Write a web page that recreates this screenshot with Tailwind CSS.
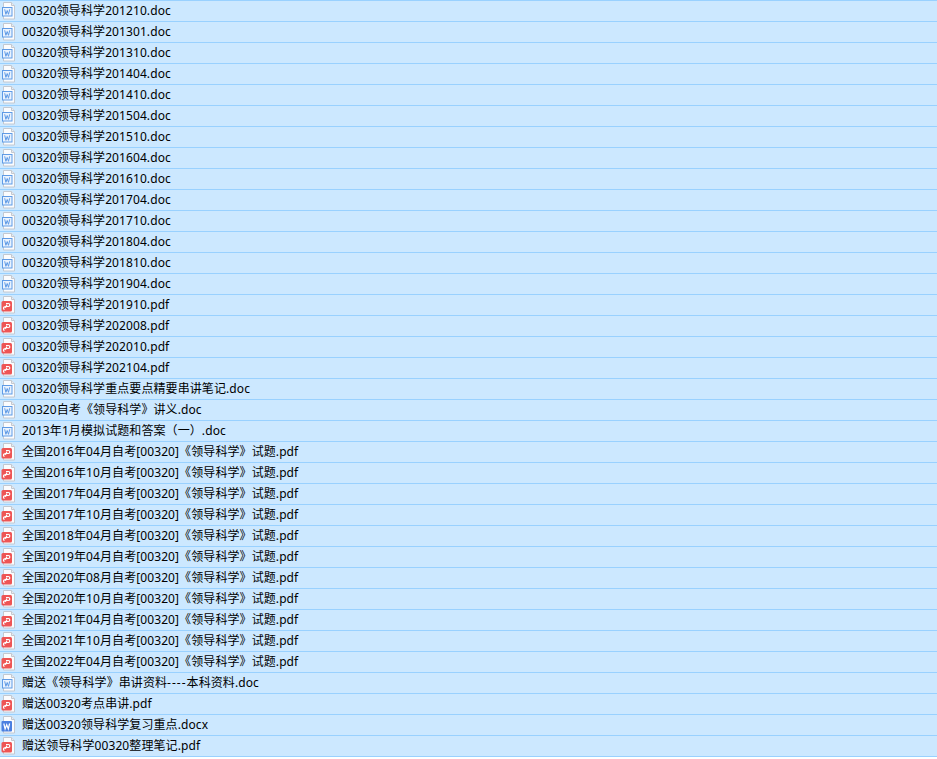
<!DOCTYPE html>
<html lang="zh">
<head>
  <meta charset="UTF-8">
  <title>00320领导科学</title>
  <script src="https://cdn.jsdelivr.net/npm/@tailwindcss/browser@4"></script>
</head>
<body class="bg-white overflow-hidden h-screen font-['Noto_Sans','Noto_Sans_CJK_SC',sans-serif] text-[12px] tracking-[0.09px] text-black">
  <svg class="hidden">
    <symbol id="doc" viewBox="0 0 16 18">
      <path d="M3.500.5h8l3 3v13.500h-11z" fill="#fbfcfe" stroke="#c3c8d0"/>
      <path d="M11.500.5v3h3" fill="#e8ebf0" stroke="#c3c8d0"/>
      <rect x="2.500" y="5.500" width="9.500" height="8.500" fill="#eaf3fe" stroke="#5f9be6"/>
      <path d="M4.700 7.300l1.200 5 1.300-3.800 1.300 3.800 1.200-5" fill="none" stroke="#5f9be6"/>
    </symbol>
    <symbol id="docx" viewBox="0 0 16 18">
      <path d="M3.500.5h8l3 3v13.500h-11z" fill="#fbfcfe" stroke="#c3c8d0"/>
      <path d="M11.500.5v3h3" fill="#e8ebf0" stroke="#c3c8d0"/>
      <rect x="1.500" y="5" width="10.500" height="10.500" rx="1" fill="#4a7fe0"/>
      <path d="M3.800 7.500l1.300 5.500L6.700 8.800l1.600 4.200 1.300-5.500" fill="none" stroke="#fff" stroke-width="1.200"/>
    </symbol>
    <symbol id="pdf" viewBox="0 0 16 18">
      <path d="M3.500.5h8l3 3v13.500h-11z" fill="#fbfcfe" stroke="#c3c8d0"/>
      <path d="M11.500.5v3h3" fill="#e8ebf0" stroke="#c3c8d0"/>
      <rect x="1.500" y="5" width="10.500" height="10.500" rx="1.500" fill="#ee5555"/>
      <path d="M4.500 13.500a1.300 1.300 0 1 1 1.200-2.200L7 8.500M6 7.500h2.300a1.500 1.500 0 0 1 0 3H5" fill="none" stroke="#fff" stroke-width="1.200"/>
    </symbol>
  </svg>

  <ul id="list" class="flex flex-col border-t border-[#99d1ff]"></ul>

  <script>
    const files = [
      '00320领导科学201210.doc', '00320领导科学201301.doc', '00320领导科学201310.doc',
      '00320领导科学201404.doc', '00320领导科学201410.doc', '00320领导科学201504.doc',
      '00320领导科学201510.doc', '00320领导科学201604.doc', '00320领导科学201610.doc',
      '00320领导科学201704.doc', '00320领导科学201710.doc', '00320领导科学201804.doc',
      '00320领导科学201810.doc', '00320领导科学201904.doc', '00320领导科学201910.pdf',
      '00320领导科学202008.pdf', '00320领导科学202010.pdf', '00320领导科学202104.pdf',
      '00320领导科学重点要点精要串讲笔记.doc', '00320自考《领导科学》讲义.doc',
      '2013年1月模拟试题和答案（一）.doc',
      '全国2016年04月自考[00320]《领导科学》试题.pdf', '全国2016年10月自考[00320]《领导科学》试题.pdf',
      '全国2017年04月自考[00320]《领导科学》试题.pdf', '全国2017年10月自考[00320]《领导科学》试题.pdf',
      '全国2018年04月自考[00320]《领导科学》试题.pdf', '全国2019年04月自考[00320]《领导科学》试题.pdf',
      '全国2020年08月自考[00320]《领导科学》试题.pdf', '全国2020年10月自考[00320]《领导科学》试题.pdf',
      '全国2021年04月自考[00320]《领导科学》试题.pdf', '全国2021年10月自考[00320]《领导科学》试题.pdf',
      '全国2022年04月自考[00320]《领导科学》试题.pdf',
      '赠送《领导科学》串讲资料----本科资料.doc', '赠送00320考点串讲.pdf',
      '赠送00320领导科学复习重点.docx', '赠送领导科学00320整理笔记.pdf'
    ];

    document.getElementById('list').innerHTML = files.map((name) => {
      const type = name.split('.').pop();
      // the dashes are wider in the original font
      const label = name.replace('----', '<span class="tracking-[1px]">----</span>');
      return `<li class="h-[21px] flex items-center gap-[6px] bg-[#cce8ff] border-b border-[#99d1ff] whitespace-nowrap">
        <svg class="w-[16px] h-[18px] shrink-0"><use href="#${type}"></use></svg>
        <span>${label}</span>
      </li>`;
    }).join('');
  </script>
</body>
</html>
